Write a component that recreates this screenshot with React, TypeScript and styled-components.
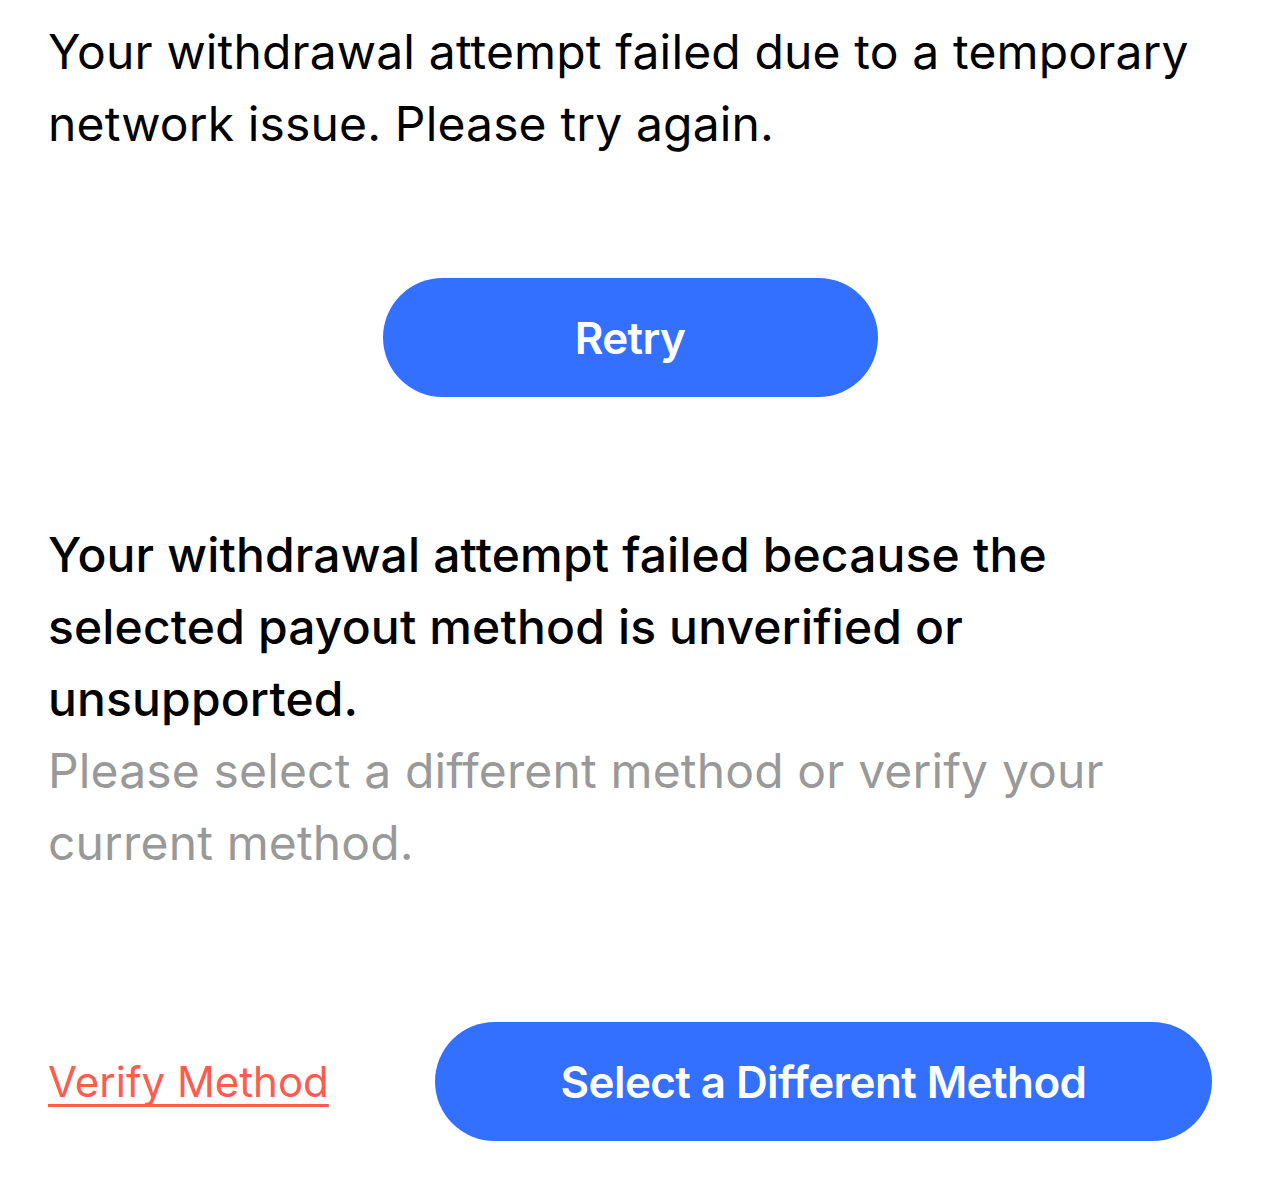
import styled, { createGlobalStyle } from 'styled-components';

const GlobalStyle = createGlobalStyle`
    html, body {
        margin: 0;
        padding: 0;
        background: #ffffff;
    }
    body {
        font-family: Inter, "Noto Sans", sans-serif;
        color: #000000;
    }
`;

const Page = styled.main`
    width: 1272px;
    box-sizing: border-box;
    padding: 16px 60px 0 48px;
    display: flex;
    flex-direction: column;
`;

const Message = styled.p<{ $strong?: boolean; $muted?: boolean }>`
    margin: 0;
    font-size: 48px;
    line-height: 72px;
    letter-spacing: 0.15px;
    font-weight: ${(p) => (p.$strong ? 500 : 400)};
    color: ${(p) => (p.$muted ? '#999999' : '#000000')};
`;

const CenterRow = styled.div`
    display: flex;
    justify-content: center;
    margin-top: 118px;
`;

const PillButton = styled.button<{ $width: number }>`
    width: ${(p) => p.$width}px;
    height: 119px;
    border: none;
    border-radius: 60px;
    background-color: #3370ff;
    color: #ffffff;
    font-family: Inter, "Noto Sans", sans-serif;
    font-size: 44px;
    font-weight: 600;
    letter-spacing: -0.6px;
    cursor: pointer;
`;

const Section = styled.section`
    margin-top: 122px;
`;

const ActionRow = styled.div`
    display: flex;
    align-items: center;
    justify-content: space-between;
    margin-top: 143px;
`;

const TextLink = styled.a`
    font-size: 42px;
    line-height: 72px;
    color: #ff5b4f;
    text-decoration: underline;
    text-decoration-skip-ink: none;
    text-underline-offset: 7px;
    text-decoration-thickness: 3px;
    cursor: pointer;
`;

export default function App() {
    return (
        <>
            <GlobalStyle />
            <Page>
                <Message>
                    Your withdrawal attempt failed due to a temporary network issue. Please try again.
                </Message>
                <CenterRow>
                    <PillButton $width={495}>Retry</PillButton>
                </CenterRow>
                <Section>
                    <Message $strong>
                        Your withdrawal attempt failed because the selected payout method is unverified or
                        unsupported.
                    </Message>
                    <Message $muted>
                        Please select a different method or verify your current method.
                    </Message>
                </Section>
                <ActionRow>
                    <TextLink>Verify Method</TextLink>
                    <PillButton $width={777}>Select a Different Method</PillButton>
                </ActionRow>
            </Page>
        </>
    );
}
